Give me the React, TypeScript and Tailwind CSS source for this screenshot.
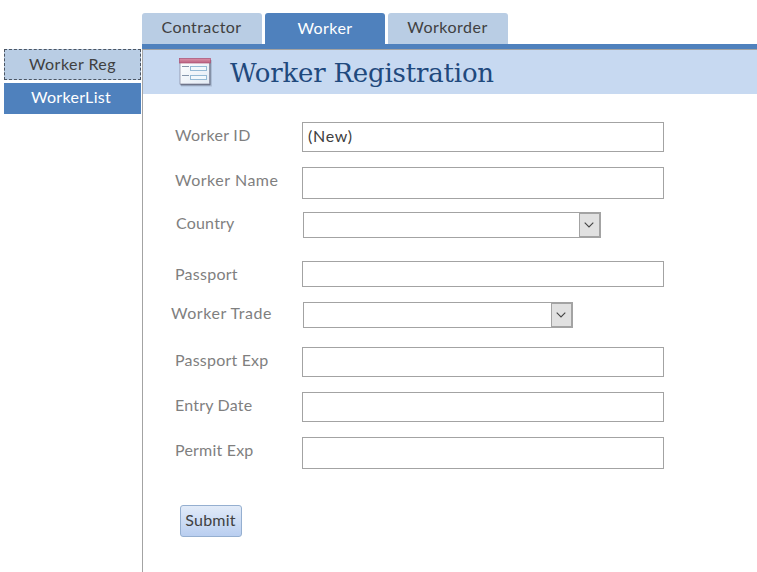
type Field = {
  label: string;
  row: string;
  labelClass: string;
  control: string;
  value?: string;
  select?: boolean;
};

const fields: Field[] = [
  { label: 'Worker ID', row: 'h-[30px]', labelClass: 'mt-[3px] ml-[32px] w-[127px] tracking-[0.3px]', control: 'w-[362px]', value: '(New)' },
  { label: 'Worker Name', row: 'mt-[15px] h-8', labelClass: 'mt-[3px] ml-[32px] w-[127px] tracking-[0.52px]', control: 'w-[362px]' },
  { label: 'Country', row: 'mt-[13px] h-[26px]', labelClass: 'mt-px ml-[33px] w-[127px] tracking-[0.2px]', control: 'w-[298px]', select: true },
  { label: 'Passport', row: 'mt-[23px] h-[26px]', labelClass: 'mt-[3px] ml-[32px] w-[127px] tracking-[0.25px]', control: 'w-[362px]' },
  { label: 'Worker Trade', row: 'mt-[15px] h-[26px]', labelClass: 'mt-px ml-[28px] w-[132px] tracking-[0.54px]', control: 'w-[270px]', select: true },
  { label: 'Passport Exp', row: 'mt-[19px] h-[30px]', labelClass: 'mt-[3px] ml-[32px] w-[127px] tracking-[0.2px]', control: 'w-[362px]' },
  { label: 'Entry Date', row: 'mt-[15px] h-[30px]', labelClass: 'mt-[3px] ml-[32px] w-[127px] tracking-[0.2px]', control: 'w-[362px]' },
  { label: 'Permit Exp', row: 'mt-[15px] h-8', labelClass: 'mt-[3px] ml-[32px] w-[127px] tracking-[0.2px]', control: 'w-[362px]' },
];

function FormIcon() {
  return (
    <svg width="34" height="30" viewBox="0 0 34 30" className="mt-0.5 shrink-0">
      <defs>
        <linearGradient id="pageFill" x1="0" y1="0" x2="1" y2="1">
          <stop offset="0" stopColor="#ffffff" />
          <stop offset="1" stopColor="#e3ebf4" />
        </linearGradient>
        <linearGradient id="titleFill" x1="0" y1="0" x2="0" y2="1">
          <stop offset="0" stopColor="#dc91a8" />
          <stop offset="1" stopColor="#b9607f" />
        </linearGradient>
      </defs>
      <rect x="2" y="2" width="31" height="26.5" fill="#7f8ca3" opacity="0.35" />
      <rect x="1.5" y="2" width="30" height="25.3" fill="#5c6478" />
      <rect x="1" y="1" width="29.5" height="25" fill="url(#pageFill)" stroke="#8c8fa5" strokeWidth="0.8" />
      <rect x="0.5" y="0.5" width="31" height="4.5" fill="url(#titleFill)" stroke="#ae5375" strokeWidth="0.7" />
      <path d="M3 8.5H10M3 17.5H10" stroke="#8595aa" />
      <rect x="11.5" y="8.5" width="16" height="4" fill="#f2f8fc" stroke="#94b9d5" />
      <rect x="11.5" y="17.5" width="16" height="4" fill="#f2f8fc" stroke="#94b9d5" />
    </svg>
  );
}

function SelectArrow() {
  return (
    <span className="flex h-full w-[21px] items-center justify-center border border-[#a3a3a3] bg-[#e1e1e1] pr-px">
      <svg width="10" height="6" viewBox="0 0 10 6" fill="none" stroke="#444444" strokeWidth="1.1">
        <path d="M0.7 0.7L5 5L9.3 0.7" />
      </svg>
    </span>
  );
}

export default function App() {
  return (
    <div className="flex h-[572px] w-[757px] overflow-hidden bg-white font-['Lato',sans-serif] text-base leading-5 text-[#404040]">
      <nav className="flex w-[142px] shrink-0 flex-col gap-[3px] pt-[49px] pr-px pl-1">
        <button className="h-[31px] border border-dashed border-[#4b5563] bg-[#b9cde4] pb-0.5 leading-5 tracking-[0.45px]">Worker Reg</button>
        <button className="h-[31px] bg-[#4f81bd] pr-[3px] pb-1 leading-5 tracking-[0.3px] text-white">WorkerList</button>
      </nav>

      <div className="flex min-w-0 flex-1 flex-col pt-[13px]">
        <div className="flex h-[31px] gap-[3px]">
          <button className="w-[120px] rounded-t-[3px] bg-[#b9cde4] pr-px pb-[3px] leading-5 tracking-[0.4px]">Contractor</button>
          <button className="w-[120px] rounded-t-[3px] bg-[#4f81bd] pb-px leading-5 tracking-[0.4px] text-white">Worker</button>
          <button className="w-[120px] rounded-t-[3px] bg-[#b9cde4] pr-px pb-[3px] leading-5 tracking-[0.5px]">Workorder</button>
        </div>
        <div className="h-[5px] shrink-0 bg-[#4f81bd]" />

        <main className="flex flex-1 flex-col border-t border-l border-[#a3a3a3]">
          <header className="flex h-11 shrink-0 items-center bg-[#c7d9f1] pl-9">
            <FormIcon />
            <h1 className="mt-0.5 ml-[17px] font-['DejaVu_Serif',serif] text-[26px] leading-9 tracking-[-0.2px] text-[#1f497d]">Worker Registration</h1>
          </header>

          <form className="flex flex-col pt-7" onSubmit={(e) => e.preventDefault()}>
            {fields.map((f) => (
              <div key={f.label} className={`flex items-start ${f.row}`}>
                <span className={`shrink-0 whitespace-nowrap text-[#7f7f7f] ${f.labelClass}`}>{f.label}</span>
                {f.select ? (
                  <div className={`flex h-full justify-end border border-[#a3a3a3] bg-white ${f.control}`}>
                    <SelectArrow />
                  </div>
                ) : (
                  <div className={`h-full border border-[#a3a3a3] bg-white pt-[3px] pl-[5px] tracking-[0.7px] ${f.control}`}>{f.value}</div>
                )}
              </div>
            ))}
            <button className="mt-9 ml-[37px] h-8 w-[62px] rounded-[3px] border border-[#95afd0] bg-linear-to-b from-[#e2ebf8] to-[#b9cef0] pr-px pb-[3px] leading-5 tracking-[0.2px]">
              Submit
            </button>
          </form>
        </main>
      </div>
    </div>
  );
}
